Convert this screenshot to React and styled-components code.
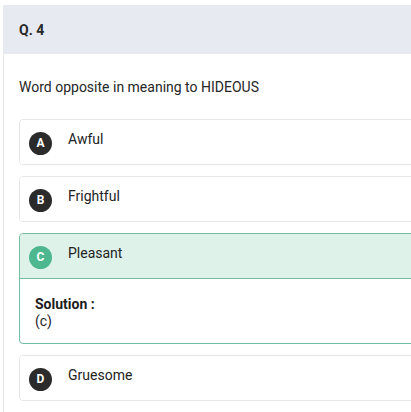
import * as React from "react";
import styled, { createGlobalStyle } from "styled-components";

const GlobalStyle = createGlobalStyle`
  html, body {
    margin: 0;
    padding: 0;
    background: #ffffff;
    overflow: hidden;
  }
  body {
    font-family: Roboto, "Liberation Sans", Arial, sans-serif;
    color: #222222;
  }
`;

const Card = styled.div`
  margin: 5px 0 0 3px;
  width: 440px;
  border-left: 1px solid #e6e6e6;
  min-height: 420px;
`;

const Header = styled.div`
  height: 49px;
  margin-left: -1px;
  padding-left: 16px;
  display: flex;
  align-items: center;
  background: #e7eaf1;
  font-size: 14px;
  font-weight: 700;
  color: #2a2a2a;
`;

const Body = styled.div`
  padding: 23px 0 0 15px;
`;

const Question = styled.p`
  margin: 0 0 22px;
  font-size: 14px;
  line-height: 20px;
  color: #262626;
`;

const Options = styled.div`
  display: flex;
  flex-direction: column;
  gap: 11px;
`;

const Option = styled.div`
  border: 1px solid ${(p) => (p.$correct ? "#74bca4" : "#e6e6e6")};
  border-radius: 4px;
  overflow: hidden;
`;

const OptionRow = styled.div`
  height: 44px;
  padding: 0 12px 0 9px;
  display: flex;
  align-items: center;
  gap: 16px;
  background: ${(p) => (p.$correct ? "#def2ea" : "#ffffff")};
  border-bottom: ${(p) => (p.$correct ? "1px solid #74bca4" : "none")};
`;

const Letter = styled.span`
  width: 23px;
  height: 23px;
  border-radius: 50%;
  flex: none;
  display: flex;
  align-items: center;
  justify-content: center;
  background: ${(p) => (p.$correct ? "#4db88f" : "#2b2b2b")};
  color: #ffffff;
  font-size: 12px;
  font-weight: 700;
  margin-top: 2px;
`;

const Label = styled.span`
  font-size: 14px;
  line-height: 20px;
  padding-bottom: 6px;
  color: #232323;
`;

const Solution = styled.div`
  padding: 17px 15px 13px;
  font-size: 14px;
  line-height: 17px;
  color: #262626;
`;

const SolutionTitle = styled.div`
  font-weight: 700;
  color: #1c1c1c;
`;

const options = [
  { key: "A", text: "Awful" },
  { key: "B", text: "Frightful" },
  { key: "C", text: "Pleasant", correct: true, solution: "(c)" },
  { key: "D", text: "Gruesome" },
];

export default function App() {
  return (
    <>
      <GlobalStyle />
      <Card>
        <Header>Q. 4</Header>
        <Body>
          <Question>Word opposite in meaning to HIDEOUS</Question>
          <Options>
            {options.map((o) => (
              <Option key={o.key} $correct={o.correct}>
                <OptionRow $correct={o.correct}>
                  <Letter $correct={o.correct}>{o.key}</Letter>
                  <Label>{o.text}</Label>
                </OptionRow>
                {o.solution && (
                  <Solution>
                    <SolutionTitle>Solution :</SolutionTitle>
                    <div>{o.solution}</div>
                  </Solution>
                )}
              </Option>
            ))}
          </Options>
        </Body>
      </Card>
    </>
  );
}
